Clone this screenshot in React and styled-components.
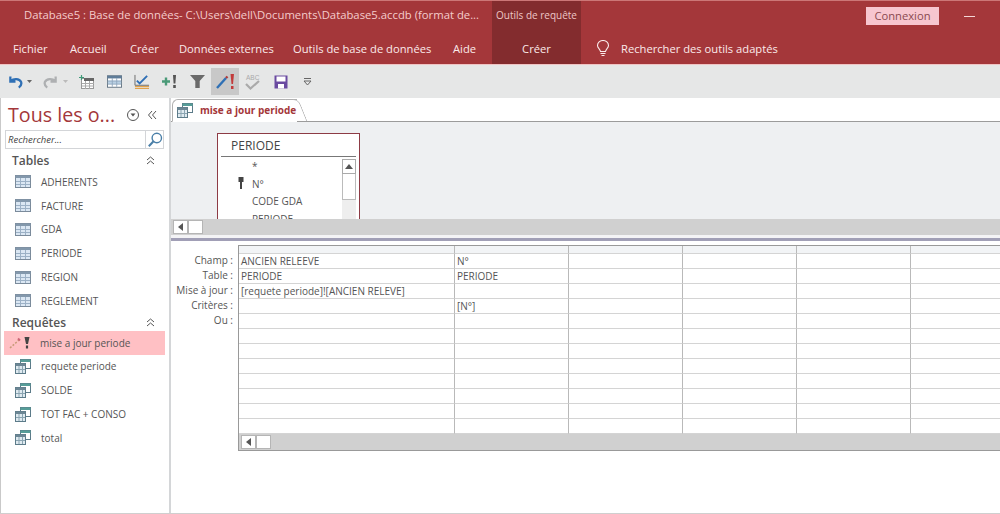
import React from "react";
import styled, { createGlobalStyle } from "styled-components";

const Global = createGlobalStyle`
  html, body { margin: 0; padding: 0; background: #fff; }
  body { font-family: "Open Sans", "Noto Sans", "Liberation Sans", sans-serif; color: #444; overflow: hidden; }
  * { box-sizing: border-box; }
`;
const Shell = styled.div`
  width: 1000px; height: 514px; display: flex; flex-direction: column; overflow: hidden;
  border-bottom: 1px solid #cfcfcf;
`;
const Ribbon = styled.header`
  height: 65px; flex: none; background: #a4373a; color: #fff; display: flex; flex-direction: column;
  border-top: 1px solid #c77; border-bottom: 1px solid #f0c4c4;
`;
const TitleRow = styled.div`
  height: 31px; display: flex; align-items: stretch; padding-left: 24px;
`;
const TitleText = styled.div`
  width: 468px; font-size: 11.3px; line-height: 28px; color: #f5cccc; white-space: nowrap; overflow: hidden;
`;
const ContextHead = styled.div`
  width: 89px; background: #832c2e; color: #eec6c6; font-size: 10px; line-height: 29px; text-align: center; white-space: nowrap;
`;
const Spacer = styled.div`flex: 1;`;
const Connect = styled.div`
  width: 73px; height: 18px; margin: 6px 25px 0 0; background: #f7c6cf; color: #8a4a50; font-size: 11.2px;
  line-height: 17px; text-align: center;
`;
const Minimize = styled.div`
  width: 11px; height: 1px; margin: 15px 25px 0 0; background: #f4d6d6;
`;
const TabRow = styled.nav`
  height: 32px; display: flex; align-items: stretch; font-size: 11.2px; line-height: 33px; padding-left: 13px;
`;
const TabGroup = styled.div`
  width: 479px; flex: none; display: flex; align-items: stretch;
`;
const Tab = styled.div`
  width: ${p => p.$w}px; flex: none; white-space: nowrap; color: #fbeaea;
`;
const ContextTab = styled.div`
  width: 89px; flex: none; background: #832c2e; text-align: center; color: #fbeaea;
`;
const Search = styled.div`
  display: flex; align-items: center; gap: 11px; margin-left: 15px; color: #fbeaea; white-space: nowrap;
`;
const Toolbar = styled.div`
  height: 33px; background: #e6e7e7; display: flex; align-items: center; padding-left: 6px; flex: none;
`;
const ToolSlot = styled.div`
  width: ${p => p.$w}px; height: 27px; display: flex; align-items: center; justify-content: center; flex: none;
  background: ${p => (p.$active ? "#c8c8c8" : "transparent")};
`;
const Body = styled.div`flex: 1; display: flex; min-height: 0;`;
const Nav = styled.aside`
  width: 171px; flex: none; background: #fff; border-left: 1px solid #c9c9c9; border-right: 2px solid #d4d6d8;
  display: flex; flex-direction: column;
`;
const NavHead = styled.div`
  height: 32px; flex: none; display: flex; align-items: center; padding: 2px 7px 0 7px;
`;
const NavTitle = styled.div`
  font-size: 19.7px; color: #a4373a; flex: 1; white-space: nowrap; line-height: 30px; font-weight: 400;
`;
const NavSearch = styled.div`
  height: 19px; flex: none; margin: 0 5px 0 4px; border: 1px solid #d3d5d8; display: flex; align-items: center; justify-content: space-between;
  font-size: 9.5px; font-style: italic; color: #444; padding-left: 2px;
`;
const SearchBtn = styled.div`
  width: 18px; height: 17px; display: flex; align-items: center; justify-content: center; border-left: 1px solid #d3d5d8;
`;
const GroupHead = styled.div`
  height: ${p => p.$h}px; flex: none; display: flex; align-items: center; justify-content: space-between; padding: ${p => p.$pt || 0}px 14px 0 11px;
  font-size: 12px; font-weight: 600; color: #555;
`;
const Item = styled.div`
  height: 23.8px; flex: none; margin: 0 4px 0 3px; padding-left: ${p => p.$pl || 11}px; display: flex; align-items: center; gap: ${p => p.$gap || 9}px; font-size: 10px; color: #555;
  background: ${p => (p.$sel ? "#ffc0c4" : "transparent")}; white-space: nowrap;
`;
const Main = styled.main`flex: 1; min-width: 0; display: flex; flex-direction: column; background: #fff;`;
const DocTabs = styled.div`
  height: 24px; flex: none; border-bottom: 1px solid #9b9b9b; background: #fff; display: flex; align-items: flex-end; padding-left: 1px;
`;
const DocTab = styled.div`
  height: 23px; width: 125px; border: 1px solid #b0b0b0; border-right: none; border-bottom: 1px solid #fff; border-radius: 6px 0 0 0; margin-bottom: -1px;
  display: flex; align-items: center; gap: 7px; padding: 0 0 1px 4px; font-size: 10px; font-weight: 700; color: #a4373a; white-space: nowrap;
  position: relative;
  &::after {
    content: ""; position: absolute; top: -1px; right: -6px; bottom: 0; width: 12px;
    border: 1px solid #b0b0b0; border-left: none; border-bottom: none; border-radius: 0 6px 0 0; transform: skewX(22deg); background: #fff;
  }
`;
const DocTabLabel = styled.span`position: relative; z-index: 1;`;
const Designer = styled.div`
  height: 97px; flex: none; background: #eef0f2; padding: 11px 0 0 46px; overflow: hidden;
`;
const TableCard = styled.div`
  width: 143px; height: 110px; background: #fff; border: 1px solid #8d3b45; padding: 0 3px;
`;
const CardTitle = styled.div`
  height: 23px; font-size: 12px; line-height: 24px; padding-left: 10px; color: #444; border-bottom: 1px solid #777;
`;
const CardBody = styled.div`display: flex; justify-content: space-between;`;
const Fields = styled.div`
  flex: 1; font-size: 10px; color: #555;
`;
const Field = styled.div`
  height: 17.6px; line-height: 18px; padding-left: 31px; position: relative; white-space: nowrap;
`;
const KeyMark = styled.svg`position: absolute; left: 17px; top: 2px;`;
const CardScroll = styled.div`
  width: 14px; margin-top: 2px; display: flex; flex-direction: column; background: #eee; height: 70px;
`;
const ScrollUp = styled.div`
  height: 15px; border: 1px solid #aaa; background: #fff; display: flex; align-items: center; justify-content: center; flex: none;
`;
const ScrollThumb = styled.div`height: 26px; border: 1px solid #bbb; border-top: none; background: #fff; flex: none;`;
const HBar = styled.div`
  height: 16px; flex: none; background: #d0d0d0; display: flex; align-items: center; padding: 0 0 0 2px;
`;
const HBtn = styled.div`
  width: 15px; height: 14px; background: #fff; border: 1px solid #b5b5b5; display: flex; align-items: center; justify-content: center; flex: none;
`;
const Splitter = styled.div`
  height: 6px; flex: none; background: #a19fb6; border-top: 3px solid #f3f3f5;
`;
const Lower = styled.div`
  flex: 1; display: flex; padding: 4px 0 0 0; background: #fff; min-height: 0;
`;
const Labels = styled.div`
  width: 67px; flex: none; padding-top: 8px; font-size: 10px; text-align: right; color: #555; white-space: nowrap;
`;
const LabelRow = styled.div`
  height: 15px; line-height: 15px; padding-right: 5px;
`;
const GridWrap = styled.div`
  flex: 1; height: 206px; border: 1px solid #999; border-right: none; display: flex; flex-direction: column; overflow: hidden;
`;
const GridTable = styled.div`
  display: grid; grid-template-columns: 216px repeat(4, 114px) 90px; grid-template-rows: 8px repeat(12, 15px);
  font-size: 10px; color: #555;
`;
const Cell = styled.div`
  border-right: 1px solid #b9b9b9; border-bottom: 1px solid #d4d4d4; line-height: 14px; padding: ${p => (p.$head ? 0 : "0 0 0 2px")};
  background: ${p => (p.$head ? "#f2f4f6" : "#fff")}; white-space: nowrap; overflow: hidden;
`;
const GridBar = styled.div`
  height: 16px; background: #d0d0d0; display: flex; align-items: center; padding-left: 2px;
`;

const TableIcon = () => (
  <svg width="16" height="13" viewBox="0 0 16 13">
    <rect x="0.5" y="0.5" width="15" height="12" fill="#dbe7f3" stroke="#7b8b9b" />
    <rect x="0.5" y="0.5" width="15" height="2.5" fill="#8398ac" />
    <path d="M5.5 3v9M10.5 3v9M1 6.5h14M1 9.5h14" stroke="#9cb1c6" fill="none" />
  </svg>
);
const QueryIcon = () => (
  <svg width="16" height="15" viewBox="0 0 16 15">
    <rect x="5.5" y="0.5" width="10" height="9" fill="#fff" stroke="#5c7b89" />
    <rect x="5.5" y="0.5" width="10" height="2.5" fill="#569d98" />
    <rect x="0.5" y="4.5" width="10" height="10" fill="#dfeaf0" stroke="#5c7b89" />
    <rect x="0.5" y="4.5" width="10" height="2.5" fill="#6c8694" />
    <path d="M4 7v7M7.500 7v7M1 10.500h9" stroke="#8ba5b2" fill="none" />
  </svg>
);
const UpdateIcon = () => (
  <svg width="22" height="14" viewBox="0 0 22 14">
    <path d="M1 12 L10 4" stroke="#c89a78" strokeWidth="1.5" strokeDasharray="2 1.5" fill="none" />
    <path d="M9 2.5l2 2" stroke="#c67" strokeWidth="2" />
    <path d="M15.500 1h5l-1.500 7h-2z" fill="#444" />
    <rect x="16.900" y="9.500" width="2.200" height="3" fill="#444" />
  </svg>
);
const Chevrons = () => (
  <svg width="9" height="9" viewBox="0 0 9 9"><path d="M1 4l3.500-3L8 4M1 8l3.500-3L8 8" fill="none" stroke="#555" strokeWidth="1" /></svg>
);
const LeftArrow = () => (
  <svg width="5" height="8" viewBox="0 0 5 8"><path d="M5 0v8L0 4z" fill="#555" /></svg>
);
const Magnifier = () => (
  <svg width="16" height="16" viewBox="0 0 16 16"><circle cx="9.800" cy="6" r="4.700" fill="none" stroke="#4a7fa8" strokeWidth="1.400" /><path d="M6.300 9.500L1.800 14.200" stroke="#4a7fa8" strokeWidth="2" /></svg>
);
const Bulb = () => (
  <svg width="14" height="17" viewBox="0 0 14 17" fill="none" stroke="#fbeaea" strokeWidth="1.100">
    <path d="M4.500 11.500C4 9 1.500 8 1.500 5.500a5.500 5 0 0 1 11 0C12.500 8 10 9 9.500 11.500z" />
    <path d="M4.500 13.500h5M5.500 15.500h3" />
  </svg>
);

const TOOLS = [
  [19, <svg width="15" height="14" viewBox="0 0 16 14"><path d="M2.500 1v5.500H8M3 6C6 3 12 3 14 7c.7 2.200-.5 4.500-2.500 6" fill="none" stroke="#2f70b5" strokeWidth="2.400" /></svg>],
  [8, <svg width="5" height="3" viewBox="0 0 5 3"><path d="M0 0h5L2.500 3z" fill="#666" /></svg>],
  [8, null],
  [19, <svg width="15" height="14" viewBox="0 0 16 14"><path d="M13.500 1v5.500H8M13 6C10 3 4 3 2 7c-.7 2.200.5 4.500 2.500 6" fill="none" stroke="#aeb0b2" strokeWidth="2.400" /></svg>],
  [11, <svg width="5" height="3" viewBox="0 0 5 3"><path d="M0 0h5L2.500 3z" fill="#bbb" /></svg>],
  [30, <svg width="15" height="14" viewBox="0 0 15 14"><rect x="2.500" y="3.500" width="12" height="10" fill="#fff" stroke="#999" /><rect x="5" y="3" width="10" height="3" fill="#666" /><path d="M6.500 6v8M10.500 6v8M3 8.500h12M3 11h12" stroke="#aaa" /><path d="M0 2.500h5M2.500 0v5" stroke="#3f9a78" strokeWidth="1.200" /></svg>],
  [26, <svg width="15" height="13" viewBox="0 0 17 14"><rect x="0.500" y="0.500" width="16" height="13" fill="#fff" stroke="#5a6c7c" /><rect x="0.500" y="0.500" width="16" height="3" fill="#5f7d99" /><rect x="1" y="6" width="15" height="4" fill="#b9d0e4" /><path d="M6 3v10M11 3v10M1 6.500h15M1 10h15" stroke="#8fa6bd" /></svg>],
  [29, <svg width="16" height="15" viewBox="0 0 17 16"><path d="M1 1v11h15" fill="none" stroke="#666" /><path d="M3 7l3 3 8-8" fill="none" stroke="#2f6fb5" strokeWidth="2" /><path d="M1 13.500h15M1 15.500h15" stroke="#e1a24b" strokeWidth="1.300" /></svg>],
  [27, <svg width="15" height="13" viewBox="0 0 15 13"><path d="M0 6.500h8M4 2.500v8" stroke="#4a9a78" strokeWidth="2.400" /><path d="M11 0h3l-.6 8.500h-1.800z" fill="#555" /><rect x="11.200" y="10" width="2.600" height="3" fill="#555" /></svg>],
  [28, <svg width="15" height="15" viewBox="0 0 17 15"><path d="M0 0h17l-6 7v8h-5V7z" fill="#6a6a6a" /></svg>],
  [28, <svg width="20" height="18" viewBox="0 0 20 18"><path d="M2 15L11 5" stroke="#2f70b5" strokeWidth="2.400" /><path d="M11 5l1.500-1.500" stroke="#b03a3a" strokeWidth="2.400" /><path d="M15.500 1h3.500l-1 10h-1.500z" fill="#c23b3b" /><rect x="16" y="13" width="2.500" height="3" fill="#c23b3b" /></svg>],
  [27, <svg width="17" height="18" viewBox="0 0 17 18"><text x="2" y="6.500" fontSize="6.500" fontFamily="Liberation Sans" fill="#aaa">ABC</text><path d="M2 11l4.500 4.500L15 8" fill="none" stroke="#aaa" strokeWidth="2.200" /></svg>],
  [30, <svg width="14" height="14" viewBox="0 0 14 14"><path d="M0.500 0.500h13v13h-13z" fill="#6a4aa0" /><rect x="2.500" y="1.500" width="9" height="5" fill="#fff" /><rect x="4" y="9" width="6" height="4.500" fill="#fff" /></svg>],
  [23, <svg width="9" height="8" viewBox="0 0 9 8"><path d="M1 0.500h7" stroke="#666" /><path d="M1 3l3.500 4L8 3z" fill="none" stroke="#666" /></svg>],
];

const TABLES = ["ADHERENTS", "FACTURE", "GDA", "PERIODE", "REGION", "REGLEMENT"];
const QUERIES = ["requete periode", "SOLDE", "TOT FAC + CONSO", "total"];
const ROWS = [
  ["ANCIEN RELEEVE", "N°"],
  ["PERIODE", "PERIODE"],
  ["[requete periode]![ANCIEN RELEVE]", ""],
  ["", "[N°]"],
];
const LABELS = ["Champ :", "Table :", "Mise à jour :", "Critères :", "Ou :"];

export default function App() {
  const gridCells = [];
  for (let c = 0; c < 6; c++) gridCells.push(<Cell key={`h${c}`} $head />);
  for (let r = 0; r < 12; r++) {
    for (let c = 0; c < 6; c++) {
      gridCells.push(<Cell key={`${r}-${c}`}>{ROWS[r] && ROWS[r][c] ? ROWS[r][c] : ""}</Cell>);
    }
  }
  return (
    <Shell>
      <Global />
      <Ribbon>
        <TitleRow>
          <TitleText>Database5 : Base de données- C:\Users\dell\Documents\Database5.accdb (format de...</TitleText>
          <ContextHead>Outils de requête</ContextHead>
          <Spacer />
          <Connect>Connexion</Connect>
          <Minimize />
        </TitleRow>
        <TabRow>
          <TabGroup>
            <Tab $w={57}>Fichier</Tab>
            <Tab $w={60}>Accueil</Tab>
            <Tab $w={49}>Créer</Tab>
            <Tab $w={114}>Données externes</Tab>
            <Tab $w={160}>Outils de base de données</Tab>
            <Tab $w={39}>Aide</Tab>
          </TabGroup>
          <ContextTab>Créer</ContextTab>
          <Search><Bulb />Rechercher des outils adaptés</Search>
        </TabRow>
      </Ribbon>
      <Toolbar>
        {TOOLS.map(([w, icon], i) => (
          <ToolSlot key={i} $w={w} $active={i === 10}>{icon}</ToolSlot>
        ))}
      </Toolbar>
      <Body>
        <Nav>
          <NavHead>
            <NavTitle>Tous les o...</NavTitle>
            <svg width="37" height="14" viewBox="0 0 37 14">
              <circle cx="8" cy="7" r="5.500" fill="none" stroke="#555" />
              <path d="M5.500 5.500h5L8 8.500z" fill="#555" />
              <path d="M27 3l-3.500 4 3.500 4M31 3l-3.500 4 3.500 4" fill="none" stroke="#555" />
            </svg>
          </NavHead>
          <NavSearch>Rechercher...<SearchBtn><Magnifier /></SearchBtn></NavSearch>
          <GroupHead $h={21} $pt={2}>Tables<Chevrons /></GroupHead>
          {TABLES.map(t => <Item key={t} $gap={10}><TableIcon />{t}</Item>)}
          <GroupHead $h={18} $pt={1}>Requêtes<Chevrons /></GroupHead>
          <Item $sel $pl={5}><UpdateIcon />mise a jour periode</Item>
          {QUERIES.map(q => <Item key={q} $gap={10}><QueryIcon />{q}</Item>)}
        </Nav>
        <Main>
          <DocTabs>
            <DocTab><QueryIcon /><DocTabLabel>mise a jour periode</DocTabLabel></DocTab>
          </DocTabs>
          <Designer>
            <TableCard>
              <CardTitle>PERIODE</CardTitle>
              <CardBody>
                <Fields>
                  <Field>*</Field>
                  <Field>
                    <KeyMark width="6" height="13" viewBox="0 0 6 13"><rect x="0.500" y="0" width="5" height="5" fill="#444" /><rect x="2" y="5" width="2" height="7" fill="#444" /></KeyMark>
                    N°
                  </Field>
                  <Field>CODE GDA</Field>
                  <Field>PERIODE</Field>
                </Fields>
                <CardScroll>
                  <ScrollUp><svg width="8" height="5" viewBox="0 0 8 5"><path d="M0 5h8L4 0z" fill="#555" /></svg></ScrollUp>
                  <ScrollThumb />
                </CardScroll>
              </CardBody>
            </TableCard>
          </Designer>
          <HBar>
            <HBtn><LeftArrow /></HBtn>
            <HBtn />
          </HBar>
          <Splitter />
          <Lower>
            <Labels>
              {LABELS.map(l => <LabelRow key={l}>{l}</LabelRow>)}
            </Labels>
            <GridWrap>
              <GridTable>{gridCells}</GridTable>
              <GridBar>
                <HBtn><LeftArrow /></HBtn>
                <HBtn />
              </GridBar>
            </GridWrap>
          </Lower>
        </Main>
      </Body>
    </Shell>
  );
}
